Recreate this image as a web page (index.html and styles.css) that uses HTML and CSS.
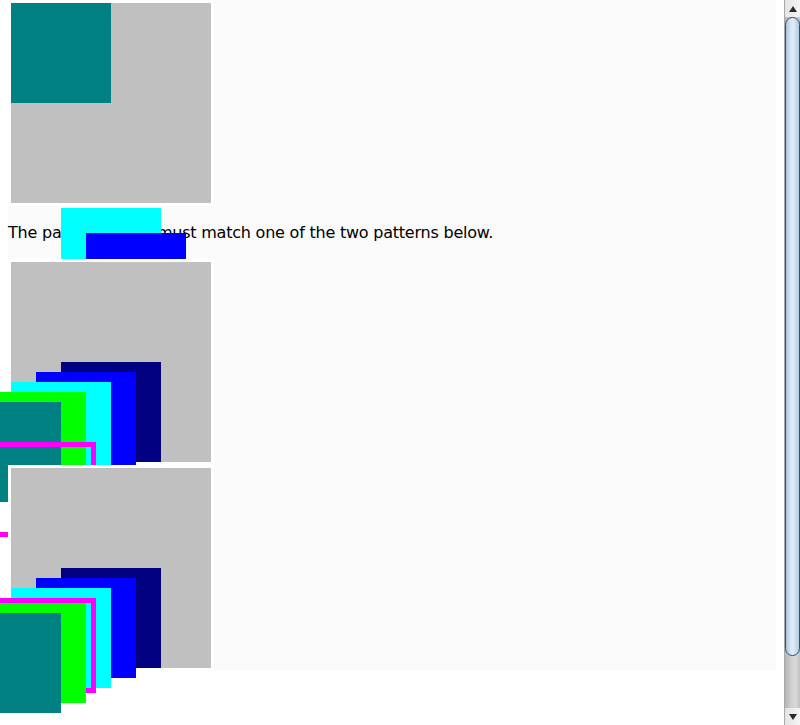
FILE: index.html
```html
<!DOCTYPE html>
<html>
<head>
<meta charset="utf-8">
<link rel="stylesheet" href="styles.css">
</head>
<body>
<div class="page">
  <div class="box">
    <div class="sq teal b1-teal"></div>
    <div class="sq cyan b1-cyan"></div>
    <div class="sq blue b1-blue"></div>
  </div>
  <p class="note">The pattern above must match one of the two patterns below.</p>
  <div class="box">
    <div class="sq navy p-navy"></div>
    <div class="sq blue p-blue"></div>
    <div class="sq cyan p-cyan"></div>
    <div class="sq lime p-lime"></div>
    <div class="sq teal p-teal"></div>
    <div class="frame a-frame"></div>
  </div>
  <div class="box">
    <div class="sq navy p-navy"></div>
    <div class="sq blue p-blue"></div>
    <div class="sq cyan p-cyan"></div>
    <div class="frame b-frame"></div>
    <div class="sq lime b-lime"></div>
    <div class="sq teal b-teal"></div>
  </div>
</div>
<div class="scrollbar">
  <div class="sb-btn"><span class="arrow up"></span></div>
  <div class="sb-track"><div class="sb-thumb"></div></div>
  <div class="sb-btn"><span class="arrow down"></span></div>
</div>
</body>
</html>
```
FILE: styles.css
```css
html {
  background: #ffffff;
  overflow: visible;
  min-height: 100%;
}
body {
  margin: 0;
  padding: 0;
  min-height: 725px;
  overflow: visible;
  font-family: "DejaVu Sans", sans-serif;
  font-size: 16px;
  color: #000;
}
.page {
  margin: 0 24px 0 8px;
  background: #fafafa;
  overflow: visible;
}
.box {
  position: relative;
  width: 200px;
  height: 200px;
  background: #c0c0c0;
  border: 3px solid #ffffff;
}
.note {
  margin: 0;
  padding: 17px 0;
  line-height: 19px;
  letter-spacing: -0.22px;
}
.sq {
  position: absolute;
  width: 100px;
  height: 100px;
}
.teal { background: #008080; }
.cyan { background: #00ffff; }
.blue { background: #0000ff; }
.navy { background: #000080; }
.lime { background: #00ff00; }

.b1-teal { left: 0; top: 0; }
.b1-cyan { left: 50px; top: 205px; }
.b1-blue { left: 75px; top: 230px; }

.p-navy { left: 50px; top: 100px; }
.p-blue { left: 25px; top: 110px; }
.p-cyan { left: 0; top: 120px; }
.p-lime { left: -25px; top: 130px; }
.p-teal { left: -50px; top: 140px; }

.frame {
  position: absolute;
  box-sizing: border-box;
  width: 110px;
  height: 95px;
  border: 5px solid #ff00ff;
}
.a-frame { left: -25px; top: 180px; }
.b-frame { left: -25px; top: 130px; }
.b-lime { left: -25px; top: 135px; }
.b-teal { left: -50px; top: 145px; }

.scrollbar {
  position: fixed;
  top: 0;
  right: 0;
  width: 16px;
  height: 100vh;
  display: flex;
  flex-direction: column;
  background: #c4c4c4;
  border-left: 1px solid #a9a9a9;
  box-sizing: border-box;
  z-index: 10;
}
.sb-btn {
  height: 17px;
  flex: none;
  background: linear-gradient(to right, #e4e4e4, #f4f4f4);
  display: flex;
  align-items: center;
  justify-content: center;
}
.arrow {
  width: 0;
  height: 0;
  border-left: 4px solid transparent;
  border-right: 4px solid transparent;
}
.arrow.up { border-bottom: 6px solid #2a2a2a; }
.arrow.down { border-top: 6px solid #2a2a2a; }
.sb-track {
  flex: 1;
  background: linear-gradient(to right, #b4b4b4, #cfcfcf 40%, #d9d9d9 70%, #c2c2c2);
  display: flex;
  flex-direction: column;
}
.sb-thumb {
  height: 639px;
  box-sizing: border-box;
  border: 1px solid #34506c;
  border-radius: 8px;
  background: linear-gradient(to right, #a8c3dc, #d6e6f5 35%, #dfecf8 55%, #b3cbe2);
}
```
